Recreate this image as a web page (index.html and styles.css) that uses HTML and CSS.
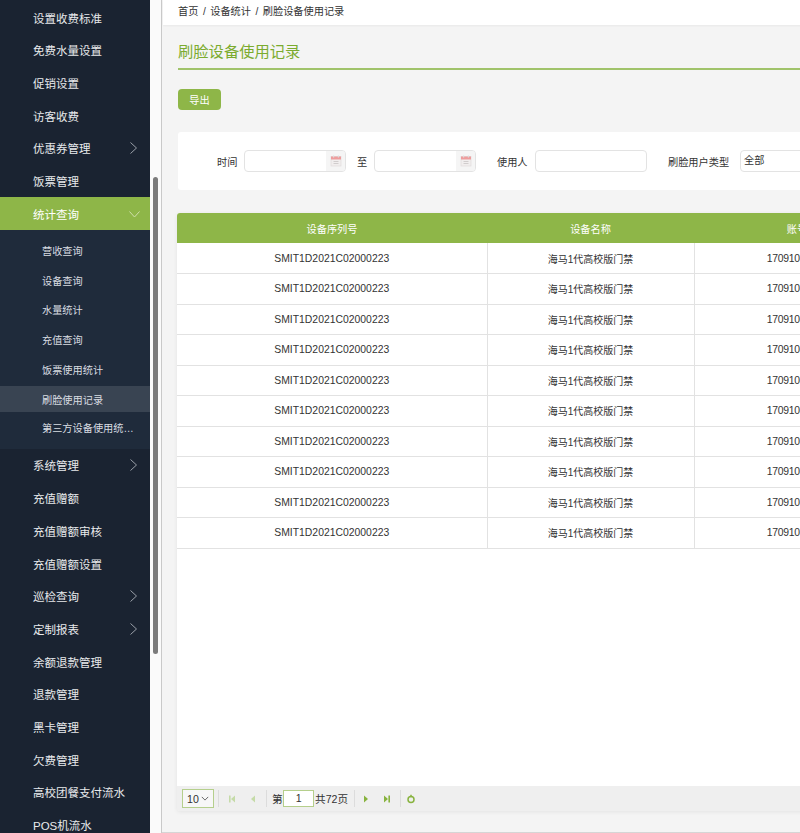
FILE: index.html
```html
<!DOCTYPE html>
<html lang="zh">
<head>
<meta charset="utf-8">
<title>刷脸设备使用记录</title>
<link rel="stylesheet" href="styles.css">
</head>
<body>
<div class="app">
  <nav class="side">
    <ul class="menu">
      <li class="item">设置收费标准</li>
      <li class="item">免费水量设置</li>
      <li class="item">促销设置</li>
      <li class="item">访客收费</li>
      <li class="item">优惠券管理<svg class="chev" viewBox="0 0 7 12"><path d="M.5.5L6.5 6l-6 5.5"/></svg></li>
      <li class="item">饭票管理</li>
      <li class="item active">统计查询<svg class="chev down" viewBox="0 0 12 7"><path d="M.5.5L6 6.5l5.5-6"/></svg></li>
      <li>
        <ul class="sub">
          <li class="subitem">营收查询</li>
          <li class="subitem">设备查询</li>
          <li class="subitem">水量统计</li>
          <li class="subitem">充值查询</li>
          <li class="subitem">饭票使用统计</li>
          <li class="subitem current">刷脸使用记录</li>
          <li class="subitem">第三方设备使用统计&nbsp;</li>
        </ul>
      </li>
      <li class="item">系统管理<svg class="chev" viewBox="0 0 7 12"><path d="M.5.5L6.5 6l-6 5.5"/></svg></li>
      <li class="item">充值赠额</li>
      <li class="item">充值赠额审核</li>
      <li class="item">充值赠额设置</li>
      <li class="item">巡检查询<svg class="chev" viewBox="0 0 7 12"><path d="M.5.5L6.5 6l-6 5.5"/></svg></li>
      <li class="item">定制报表<svg class="chev" viewBox="0 0 7 12"><path d="M.5.5L6.5 6l-6 5.5"/></svg></li>
      <li class="item">余额退款管理</li>
      <li class="item">退款管理</li>
      <li class="item">黑卡管理</li>
      <li class="item">欠费管理</li>
      <li class="item">高校团餐支付流水</li>
      <li class="item">POS机流水</li>
    </ul>
  </nav>
  <div class="track"><div class="thumb"></div></div>
  <main class="main">
    <div class="crumbs"><span>首页</span><span class="slash">/</span><span>设备统计</span><span class="slash">/</span><span>刷脸设备使用记录</span></div>
    <div class="content">
      <h1 class="title">刷脸设备使用记录</h1>
      <button class="export">导出</button>
      <form class="filter">
        <span class="lbl lbl-time">时间</span>
        <span class="date"><span class="cal"><svg viewBox="0 0 12 12"><rect x="1" y="1.5" width="10" height="9.5" fill="#f1eeee" stroke="#dcd8d8" stroke-width=".6"/><rect x="1" y="1.5" width="10" height="3" fill="#ee9d9d"/><rect x="3" y=".5" width="1.2" height="2" fill="#ddd"/><rect x="7.8" y=".5" width="1.2" height="2" fill="#ddd"/><path d="M3.5 6.5h5M3.5 8.5h5" stroke="#c9c4c4" stroke-width=".8"/></svg></span></span>
        <span class="lbl lbl-to">至</span>
        <span class="date"><span class="cal"><svg viewBox="0 0 12 12"><rect x="1" y="1.5" width="10" height="9.5" fill="#f1eeee" stroke="#dcd8d8" stroke-width=".6"/><rect x="1" y="1.5" width="10" height="3" fill="#ee9d9d"/><rect x="3" y=".5" width="1.2" height="2" fill="#ddd"/><rect x="7.8" y=".5" width="1.2" height="2" fill="#ddd"/><path d="M3.5 6.5h5M3.5 8.5h5" stroke="#c9c4c4" stroke-width=".8"/></svg></span></span>
        <span class="lbl lbl-user">使用人</span>
        <span class="text-input"></span>
        <span class="lbl lbl-type">刷脸用户类型</span>
        <span class="select">全部</span>
      </form>
      <section class="panel">
        <div class="grid-wrap">
          <table class="grid">
            <thead>
              <tr><th class="c1">设备序列号</th><th class="c2">设备名称</th><th class="c3">账号</th></tr>
            </thead>
            <tbody>
              <tr><td class="sn">SMIT1D2021C02000223</td><td class="nm">海马1代高校版门禁</td><td class="acc">17091081234</td></tr>
              <tr><td class="sn">SMIT1D2021C02000223</td><td class="nm">海马1代高校版门禁</td><td class="acc">17091081234</td></tr>
              <tr><td class="sn">SMIT1D2021C02000223</td><td class="nm">海马1代高校版门禁</td><td class="acc">17091081234</td></tr>
              <tr><td class="sn">SMIT1D2021C02000223</td><td class="nm">海马1代高校版门禁</td><td class="acc">17091081234</td></tr>
              <tr><td class="sn">SMIT1D2021C02000223</td><td class="nm">海马1代高校版门禁</td><td class="acc">17091081234</td></tr>
              <tr><td class="sn">SMIT1D2021C02000223</td><td class="nm">海马1代高校版门禁</td><td class="acc">17091081234</td></tr>
              <tr><td class="sn">SMIT1D2021C02000223</td><td class="nm">海马1代高校版门禁</td><td class="acc">17091081234</td></tr>
              <tr><td class="sn">SMIT1D2021C02000223</td><td class="nm">海马1代高校版门禁</td><td class="acc">17091081234</td></tr>
              <tr><td class="sn">SMIT1D2021C02000223</td><td class="nm">海马1代高校版门禁</td><td class="acc">17091081234</td></tr>
              <tr><td class="sn">SMIT1D2021C02000223</td><td class="nm">海马1代高校版门禁</td><td class="acc">17091081234</td></tr>
            </tbody>
          </table>
        </div>
        <div class="pager">
          <span class="size">10<svg viewBox="0 0 10 6"><path d="M1 1l4 4 4-4"/></svg></span>
          <i class="sep sep-first"></i>
          <svg class="pg dim" viewBox="0 0 10 10"><path d="M2 1.5h1.6v7H2zM8 1.5v7L4 5z"/></svg>
          <svg class="pg dim" viewBox="0 0 10 10"><path d="M7 1.5v7L3 5z"/></svg>
          <i class="sep"></i>
          <span class="pg-text">第</span>
          <span class="page-no">1</span>
          <span class="pg-text">共72页</span>
          <i class="sep"></i>
          <svg class="pg next" viewBox="0 0 10 10"><path d="M3 1.5v7L7 5z"/></svg>
          <svg class="pg" viewBox="0 0 10 10"><path d="M2 1.5v7L6 5zM6.4 1.5H8v7H6.400z"/></svg>
          <i class="sep"></i>
          <svg class="pg refresh" viewBox="0 0 10 10"><path d="M5 .8v2.400"/><circle cx="5" cy="5.400" r="3"/></svg>
        </div>
      </section>
    </div>
  </main>
</div>
</body>
</html>
```
FILE: styles.css
```css
* { box-sizing: border-box; }
html, body { margin: 0; padding: 0; height: 100%; overflow: hidden; }
body { font-family: "Liberation Sans", "Noto Sans CJK SC", sans-serif; color: #333; background: #f4f4f4; }
ul { list-style: none; margin: 0; padding: 0; }

.app { display: flex; width: 800px; height: 833px; overflow: hidden; }

.side { flex: 0 0 150px; height: 833px; background: #1a2331; color: #e8eaec; overflow: hidden; padding-top: 1.3px; }
.item { display: flex; align-items: center; justify-content: space-between; height: 32.7px; padding: 0 13px 0 33px; font-size: 11.5px; white-space: nowrap; }
.item.active { background: #8eb648; color: #fff; }
.chev { width: 7px; height: 12px; fill: none; stroke: #9aa0a8; stroke-width: 1; }
.chev.down { width: 11px; height: 6.5px; stroke: #d5e3b5; margin-right: -2.5px; }
.sub { background: #1f2b3b; padding: 5.5px 0 5px; }
.subitem { display: flex; align-items: center; height: 29.75px; padding: 0 16px 0 42px; font-size: 10.2px; color: #d9dde2; }
.subitem.current { background: #394452; height: 26px; margin: 2px 0 1.75px; }
.subitem:last-child { display: block; margin-top: 2px; line-height: 29.75px; overflow: hidden; white-space: nowrap; text-overflow: ellipsis; }

.track { flex: 0 0 12px; background: #fafafa; border-right: 1px solid #c9c9c9; padding: 177px 3px 0; }
.thumb { width: 5px; height: 477px; border-radius: 3px; background: #7b7b7b; }

.main { flex: 0 0 auto; width: 900px; height: 833px; border-bottom: 1px solid #d5d5d5; }
.crumbs { height: 24.5px; margin-left: 1px; background: #fff; font-size: 10.2px; line-height: 24px; padding-left: 15px; color: #333; box-shadow: 0 1px 2px rgba(0,0,0,.05); }
.slash { margin: 0 4.5px; }
.content { padding: 0 0 0 16px; }
.title { margin: 0; height: 45.5px; padding-top: 15.5px; border-bottom: 2px solid #a0c36a; font-size: 15.3px; line-height: 24px; font-weight: 400; color: #7bab2e; }
.export { display: block; margin-top: 19px; width: 43px; height: 21px; padding: 0; border: 0; border-radius: 4px; background: #8eb648; color: #fff; font: inherit; font-size: 10.2px; }

.filter { display: flex; align-items: center; margin-top: 22px; width: 900px; height: 58px; background: #fff; border-radius: 3px; font-size: 10.2px; }
.lbl { color: #333; white-space: nowrap; }
.lbl-time { margin-left: 39px; width: 27px; }
.lbl-to { margin-left: 11px; width: 17px; }
.lbl-user { margin-left: 21px; width: 38px; }
.lbl-type { margin-left: 21px; width: 72px; }
.date { display: flex; justify-content: flex-end; width: 102px; height: 22px; background: #fff; border: 1px solid #e3e3e3; border-radius: 4px; }
.cal { display: flex; align-items: center; justify-content: center; width: 19px; background: #f5f5f5; border-radius: 0 3px 3px 0; }
.cal svg { width: 12px; height: 12px; }
.text-input { width: 112px; height: 22px; border: 1px solid #e3e3e3; border-radius: 4px; background: #fff; }
.select { width: 120px; height: 22px; padding-left: 3px; line-height: 20px; border: 1px solid #e3e3e3; border-radius: 4px; }

.panel { margin-top: 23px; margin-left: -1px; width: 900px; height: 598px; border-radius: 3px; box-shadow: 0 1px 4px rgba(0,0,0,.07); display: flex; flex-direction: column; overflow: hidden; }
.grid-wrap { height: 573px; background: #fff; }
.grid { border-collapse: collapse; table-layout: fixed; width: 723px; }
.grid th { height: 30px; background: #8eb648; color: #fff; font-weight: 400; font-size: 10.2px; padding: 0; }
.grid td { height: 30.5px; padding: 0; text-align: center; color: #333; border-right: 1px solid #e2e2e2; border-bottom: 1px solid #e2e2e2; }
.sn { font-size: 10.4px; }
.acc { font-size: 10.4px; letter-spacing: -.3px; }
.nm { font-size: 10px; }
.c1 { width: 310px; }
.c2 { width: 207px; }
.c3 { width: 206px; }

.pager { display: flex; align-items: center; height: 25px; background: #efefef; padding-left: 5px; font-size: 10.6px; color: #333; }
.size { display: flex; align-items: center; justify-content: space-between; width: 32px; height: 19px; padding: 0 4px; border: 1px solid #b5cf8c; background: #f7f7f7; }
.size svg { width: 8px; height: 5px; fill: none; stroke: #444; stroke-width: 1; }
.sep { width: 1px; height: 17px; background: #dcdcdc; margin: 0 5px 0 6px; }
.sep-first { margin-left: 4px; }
.pg { width: 10px; height: 10px; margin: 0 2px 0 3px; fill: #88b33f; }
.pg + .pg { margin-left: 9px; }
.pg.next { margin-left: 1px; }
.pg.dim { fill: #c5dba8; }
.pg.refresh { margin-left: 0; fill: none; stroke: #88b33f; stroke-width: 1.5; }
.pg-text { white-space: nowrap; }
.page-no { width: 31px; height: 17px; margin: 0 1px 0 .5px; border: 1px solid #b5cf8c; background: #fff; text-align: center; line-height: 15px; }
```
